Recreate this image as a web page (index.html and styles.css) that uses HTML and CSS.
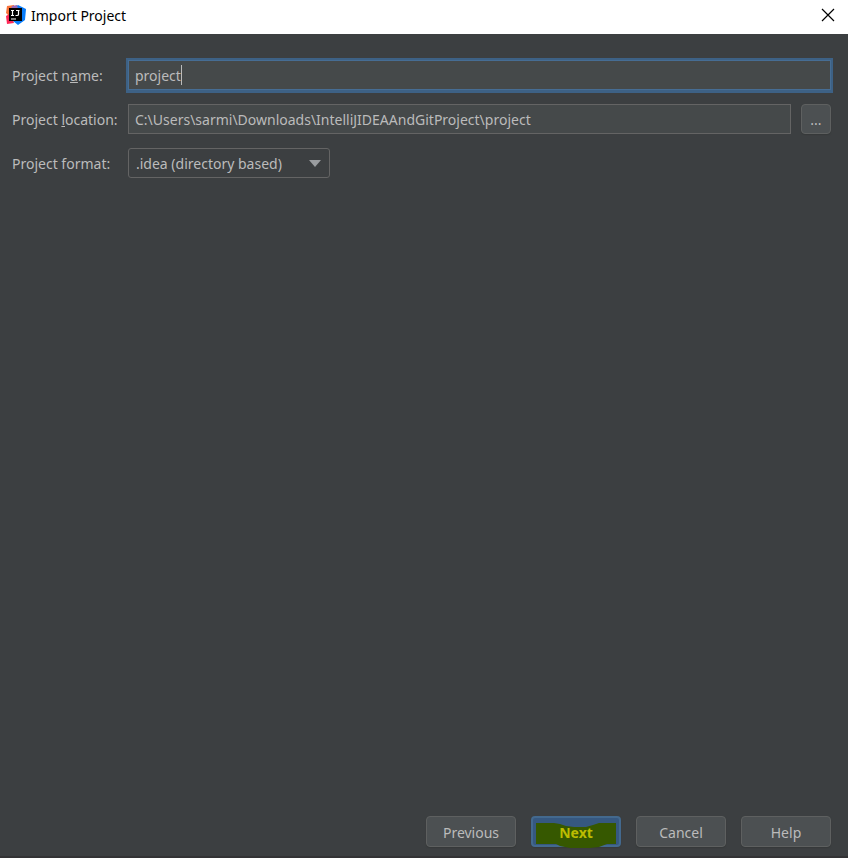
FILE: index.html
```
<!DOCTYPE html>
<html lang="en">
<head>
    <meta charset="UTF-8">
    <meta name="viewport" content="width=device-width, initial-scale=1.0">
    <title>Import Project</title>
    <link rel="stylesheet" href="styles.css">
</head>
<body>
    <header class="titlebar">
        <svg class="logo" width="20" height="20" viewBox="0 0 20 20" aria-hidden="true">
            <path d="M1 1L8 0L10 10L4 12L0 8Z" fill="#f9743c"/>
            <path d="M0 11L5 8L8 18L1 19Z" fill="#fe2857"/>
            <path d="M8 3L12 0L20 4L19 15L12 20L7 16Z" fill="#087cfa"/>
            <path d="M6 1L11 0L12 4H5Z" fill="#9a6ab8"/>
            <rect x="3" y="3" width="13" height="13" fill="#000"/>
            <path d="M5 5.500H8M6.500 5.500V10.500M5 10.500H8M10 5.500H13.500M12.500 5.500V9.500Q12.500 10.500 11 10.500H9.500M5 14H10" fill="none" stroke="#fff" stroke-width="1.200"/>
        </svg>
        <h1>Import Project</h1>
        <button class="close" aria-label="Close">
            <svg width="14" height="14" viewBox="0 0 14 14"><path d="M1 1L13 13M13 1L1 13" stroke="#000" stroke-width="1.200"/></svg>
        </button>
    </header>

    <main class="form">
        <label for="name">Project n<u>a</u>me:</label>
        <div class="field">
            <input class="focused" type="text" id="name" value="project">
            <span class="caret"></span>
        </div>

        <label for="location">Project <u>l</u>ocation:</label>
        <div class="field">
            <input type="text" id="location" value="C:\Users\sarmi\Downloads\IntelliJIDEAAndGitProject\project">
            <button class="browse" aria-label="Browse">...</button>
        </div>

        <label for="format">Project format:</label>
        <div class="field">
            <div class="select">
                <select id="format">
                    <option>.idea (directory based)</option>
                </select>
                <svg class="arrow" width="12" height="7" viewBox="0 0 12 7" aria-hidden="true"><path d="M0 0H12L6 7Z" fill="#9a9da0"/></svg>
            </div>
        </div>
    </main>

    <footer class="actions">
        <button>Previous</button>
        <button class="next">
            <svg class="marker" width="80" height="26" viewBox="0 0 80 26" aria-hidden="true"><path d="M0 1H18L24 2L30 4L38 5H50L57 3L63 1H80V22H71L63 25L54 26H34L24 24L20 22H0Z" fill="#365800"/></svg>
            <span>Next</span>
        </button>
        <button>Cancel</button>
        <button>Help</button>
    </footer>
</body>
</html>
```

FILE: styles.css
```
* {
    margin: 0;
    padding: 0;
    box-sizing: border-box;
}

body {
    display: flex;
    flex-direction: column;
    min-height: 100vh;
    background: #3c3f41;
    color: #bbb;
    border-bottom: 2px solid #333335;
}

body, input, select, button {
    font-family: "Noto Sans", "Open Sans", sans-serif;
    font-size: 14px;
}

.titlebar {
    display: flex;
    align-items: center;
    height: 34px;
    padding: 0 12px 4px 6px;
    background: #fff;
    color: #000;
}

.titlebar h1 {
    flex: 1;
    margin-left: 5px;
    font-size: 14px;
    font-weight: normal;
}

.close {
    display: flex;
    padding: 1px;
    border: none;
    background: none;
}

.form {
    display: grid;
    grid-template-columns: 116px 1fr;
    gap: 14px 0;
    align-items: center;
    padding: 26px 17px 26px 12px;
}

.form label {
    line-height: 20px;
    padding-top: 2px;
}

.field {
    position: relative;
    display: flex;
    gap: 10px;
}

input {
    flex: 1;
    min-width: 0;
    height: 30px;
    padding: 0 6px;
    border: 1px solid #646464;
    background: #45494a;
    color: #bbb;
    outline: none;
}

.focused {
    border-color: #466d94;
    box-shadow: 0 0 0 2px #3d6185, 0 1px 0 2px #3d6185;
}

.caret {
    position: absolute;
    left: 53px;
    top: 5px;
    width: 1px;
    height: 20px;
    background: #bbb;
}

button {
    border: 1px solid #5e6060;
    border-radius: 4px;
    background: #4c5052;
    color: #bbb;
}

.browse {
    width: 30px;
    height: 30px;
    box-shadow: 0 1px 1px #36393a;
}

.select {
    position: relative;
    width: 202px;
}

select {
    appearance: none;
    width: 100%;
    height: 30px;
    padding: 0 7px;
    border: 1px solid #646464;
    border-radius: 3px;
    background: #3c3f41;
    color: #bbb;
}

.arrow {
    position: absolute;
    right: 9px;
    top: 12px;
    pointer-events: none;
}

.actions {
    display: flex;
    justify-content: flex-end;
    gap: 15px;
    margin-top: auto;
    padding: 0 17px 9px;
}

.actions button {
    position: relative;
    width: 90px;
    height: 31px;
    padding-top: 2px;
    box-shadow: 0 1px 1px #36393a;
}

.actions .next {
    border: 2px solid #43698e;
    background: #365880;
    color: #bcbc00;
    font-weight: bold;
}

.next span {
    position: relative;
}

.marker {
    position: absolute;
    left: 3px;
    top: 4px;
}
```
